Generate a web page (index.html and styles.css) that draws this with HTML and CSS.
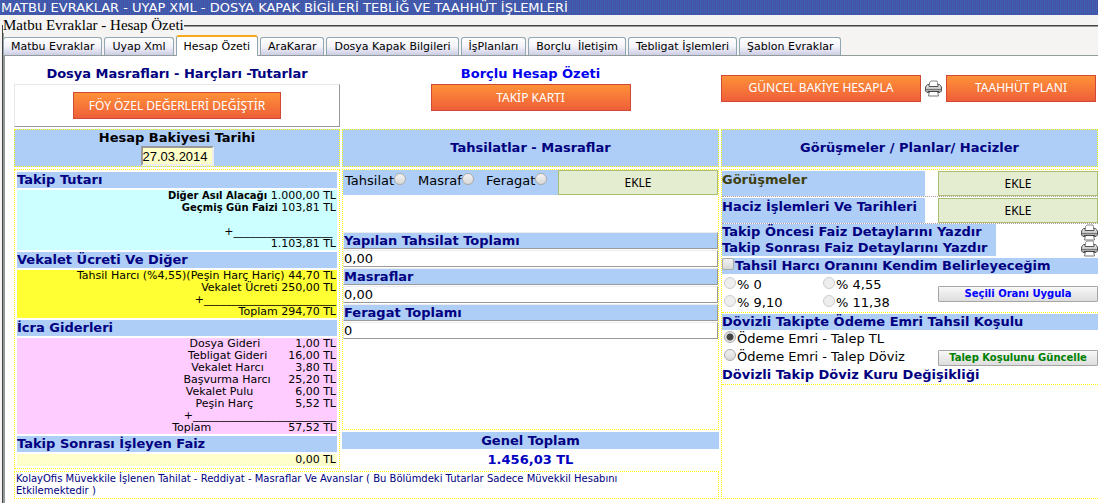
FILE: index.html
```html
<!DOCTYPE html>
<html lang="tr">
<head>
<meta charset="utf-8">
<title>Matbu Evraklar - Hesap Özeti</title>
<link rel="stylesheet" href="styles.css">
</head>
<body>
<svg class="defs" aria-hidden="true">
  <defs>
    <linearGradient id="metal" x1="0" y1="0" x2="0" y2="1">
      <stop offset="0" stop-color="#f4f4f4"/><stop offset="1" stop-color="#9a9a9a"/>
    </linearGradient>
  </defs>
  <symbol id="printer" viewBox="0 0 17 17">
    <path d="M4.500 5V2.500L6 1h6l.5 1.500V5" fill="#fff" stroke="#888"/>
    <path d="M2.500 4.500h1.500v2h9v-2h1.500l2 2.500v4l-1.500 1.500H2L.5 11V7z" fill="url(#metal)" stroke="#555"/>
    <path d="M1 9.500h15" stroke="#777"/>
    <path d="M4.500 11.500h8l1 4.500h-10z" fill="#fff" stroke="#777"/>
    <path d="M3 11.500h11" stroke="#444"/>
  </symbol>
</svg>
<header class="titlebar">MATBU EVRAKLAR - UYAP XML - DOSYA KAPAK BİGİLERİ TEBLİĞ VE TAAHHÜT İŞLEMLERİ</header>
<fieldset class="frame">
  <legend>Matbu Evraklar - Hesap Özeti</legend>
  <nav class="tabs">
    <button class="tab">Matbu Evraklar</button>
    <button class="tab">Uyap Xml</button>
    <button class="tab tab-active">Hesap Özeti</button>
    <button class="tab">AraKarar</button>
    <button class="tab">Dosya Kapak Bilgileri</button>
    <button class="tab">İşPlanları</button>
    <button class="tab">Borçlu&nbsp; İletişim</button>
    <button class="tab">Tebligat İşlemleri</button>
    <button class="tab">Şablon Evraklar</button>
  </nav>
  <main class="pane">
    <section class="top">
      <h2>Dosya Masrafları - Harçları -Tutarlar</h2>
      <div class="box"><button class="orange wide">FÖY ÖZEL DEĞERLERİ DEĞİŞTİR</button></div>
    </section>
    <section class="top">
      <h2 class="blue">Borçlu Hesap Özeti</h2>
      <button class="orange">TAKİP KARTI</button>
    </section>
    <section class="top-right">
      <button class="orange">GÜNCEL BAKİYE HESAPLA</button>
      <svg class="printer" role="img" aria-label="Yazdır"><use href="#printer"/></svg>
      <button class="orange short">TAAHHÜT PLANI</button>
    </section>

    <div class="colhead date">
      <label for="tarih">Hesap Bakiyesi Tarihi</label>
      <input id="tarih" type="text" value="27.03.2014">
    </div>
    <h2 class="colhead">Tahsilatlar - Masraflar</h2>
    <h2 class="colhead">Görüşmeler / Planlar/ Hacizler</h2>

    <section class="costs">
      <h3>Takip Tutarı</h3>
      <div class="sum cyan">
        <p><b>Diğer Asıl Alacağı</b> 1.000,00 TL</p>
        <p><b>Geçmiş Gün Faizi</b> 103,81 TL</p>
        <p>&nbsp;</p>
        <p>+__________________&nbsp;</p>
        <p>1.103,81 TL</p>
      </div>
      <h3>Vekalet Ücreti Ve Diğer</h3>
      <div class="sum yellow">
        <p>Tahsil Harcı (%4,55)(Peşin Harç Hariç) 44,70 TL</p>
        <p>Vekalet Ücreti 250,00 TL</p>
        <p>+________________________</p>
        <p>Toplam 294,70 TL</p>
      </div>
      <h3>İcra Giderleri</h3>
      <div class="sum pink">
        <p>Dosya Gideri          1,00 TL</p>
        <p>Tebligat Gideri      16,00 TL</p>
        <p>Vekalet Harcı         3,80 TL</p>
        <p>Başvurma Harcı     25,20 TL</p>
        <p>Vekalet Pulu            6,00 TL</p>
        <p>Peşin Harç            5,52 TL</p>
        <p>+__________________________</p>
        <p>Toplam                      57,52 TL</p>
      </div>
      <h3>Takip Sonrası İşleyen Faiz</h3>
      <div class="sum cream"><p>0,00 TL</p></div>
    </section>

    <section class="payments">
      <div class="entry">
        <div class="kinds">
          <label>Tahsilat<input type="radio" name="tur"></label>
          <label>Masraf<input type="radio" name="tur"></label>
          <label>Feragat<input type="radio" name="tur"></label>
        </div>
        <button class="green">EKLE</button>
      </div>
      <dl class="totals">
        <dt>Yapılan Tahsilat Toplamı</dt><dd>0,00</dd>
        <dt>Masraflar</dt><dd>0,00</dd>
        <dt>Feragat Toplamı</dt><dd>0</dd>
      </dl>
    </section>
    <section class="grand">
      <h3>Genel Toplam</h3>
      <p>1.456,03 TL</p>
    </section>

    <section class="plans">
      <div class="plan"><h3 class="olive">Görüşmeler</h3><button class="green">EKLE</button></div>
      <div class="plan"><h3>Haciz İşlemleri Ve Tarihleri</h3><button class="green">EKLE</button></div>
      <div class="print"><h3>Takip Öncesi Faiz Detaylarını Yazdır</h3><svg class="printer" role="img" aria-label="Yazdır"><use href="#printer"/></svg></div>
      <div class="print"><h3>Takip Sonrası Faiz Detaylarını Yazdır</h3><svg class="printer" role="img" aria-label="Yazdır"><use href="#printer"/></svg></div>
      <div class="option option-first">
        <h3><label><input type="checkbox">Tahsil Harcı Oranını Kendim Belirleyeceğim</label></h3>
        <div class="choices rate-choices">
          <div class="rates">
            <label><input type="radio" name="oran" disabled>% 0</label>
            <label><input type="radio" name="oran" disabled>% 4,55</label>
            <label><input type="radio" name="oran" disabled>% 9,10</label>
            <label><input type="radio" name="oran" disabled>% 11,38</label>
          </div>
          <button class="gray">Seçili Oranı Uygula</button>
        </div>
      </div>
      <div class="option">
        <h3>Dövizli Takipte Ödeme Emri Tahsil Koşulu</h3>
        <div class="choices low">
          <div class="demands">
            <label><input type="radio" name="talep" checked>Ödeme Emri - Talep TL</label>
            <label><input type="radio" name="talep">Ödeme Emri - Talep Döviz</label>
          </div>
          <button class="gray gray-green">Talep Koşulunu Güncelle</button>
        </div>
        <h3 class="plain">Dövizli Takip Döviz Kuru Değişikliği</h3>
      </div>
    </section>

    <p class="note">KolayOfis Müvekkile İşlenen Tahilat - Reddiyat - Masraflar Ve Avanslar ( Bu Bölümdeki Tutarlar Sadece Müvekkil Hesabını<br>Etkilemektedir )</p>
  </main>
</fieldset>
</body>
</html>
```
FILE: styles.css
```css
* { box-sizing: border-box; }
body {
  margin: 0;
  background: #f5f4f2;
  color: #000;
  font: 13px/16px Verdana, "DejaVu Sans", sans-serif;
}
h2, h3, p, dl, dd { margin: 0; }
h2, h3 { font-size: 13px; line-height: 16px; color: #000080; }
button, input { font-family: inherit; margin: 0; }
.defs { position: absolute; width: 0; height: 0; }

.titlebar {
  height: 15px;
  line-height: 15px;
  white-space: nowrap;
  overflow: hidden;
  padding-left: 1px;
  color: #fff;
  background: linear-gradient(90deg, #3a62b4 50%, #4c50a2 50%) 0 0 / 2px 2px;
}

.frame {
  margin: 3px 0 0 2px;
  padding: 0;
  min-width: 0;
  border: 2px groove #999;
  border-right: 0;
  border-bottom: 0;
}
.frame legend {
  margin-left: -1px;
  padding: 0;
  font: 15px/15px "Liberation Serif", serif;
}

.tabs { display: flex; align-items: flex-end; gap: 2px; height: 23px; border-bottom: 1px solid #919b9c; white-space: nowrap; }
.tab {
  height: 18px;
  padding: 0 7px;
  font-size: 11px;
  line-height: 16px;
  color: #000;
  border: 1px solid #91a7b4;
  border-bottom: 0;
  border-radius: 3px 3px 0 0;
  background: linear-gradient(#fff, #f3f3fa 50%, #cdcde4);
}
.tabs .tab:first-child { margin-left: -1px; }
.tab-active { height: 21px; margin-bottom: -1px; border-top: 2px solid #f5ab1c; background: #fff; }

.pane {
  display: grid;
  grid-template-columns: 326fr 377fr 377fr;
  grid-template-rows: 71px 38px 263px auto auto;
  column-gap: 2px;
  padding: 2px 0 5px 9px;
  border-left: 1px solid #919b9c;
  background: #fff;
}
.pane > * { min-width: 0; }

.top { display: flex; flex-direction: column; align-items: center; padding-top: 8px; gap: 2px; }
.blue { color: #0000ee; }
.box {
  align-self: stretch;
  display: flex;
  justify-content: center;
  padding: 7px 0;
  border: 1px solid #e8e8e8;
  border-right-color: #999;
  border-bottom-color: #999;
}
.top-right { display: flex; align-items: center; gap: 4px; height: 60px; }
.orange {
  width: 200px;
  height: 27px;
  padding: 0;
  border: 1px solid #d14836;
  background: linear-gradient(#ff9138, #ee5f39);
  color: #fff;
  font: 12px/16px Tahoma, "Noto Sans", sans-serif;
}
.wide { width: 208px; }
.short { width: 150px; }
.printer { width: 17px; height: 17px; flex: none; }

.colhead {
  display: flex;
  align-items: center;
  justify-content: center;
  background: #aecdf7;
  border: 1px dotted #ff0;
}
.date { flex-direction: column; font-weight: bold; }
.date input {
  width: 73px;
  height: 20px;
  padding: 0;
  border: 2px inset #eee;
  background: #ffffc8;
  font: 13px/16px Arial, "Liberation Sans", sans-serif;
}

.costs {
  grid-row: 3 / 5;
  align-self: start;
  margin-top: 2px;
  padding: 2px;
  display: flex;
  flex-direction: column;
  gap: 2px;
  border: 1px dotted #ff0;
}
.costs h3 { background: #aecdf7; }
.sum { padding-right: 1px; font-size: 11px; line-height: 12px; text-align: right; }
.sum p { white-space: pre; }
.sum b { font-size: 10px; }
.cyan { background: #cff; }
.yellow { background: #ff3; }
.pink { background: #fcf; }
.cream { background: #ffc; }

.payments { margin-top: 2px; border: 1px dotted #ff0; }
.entry { display: flex; background: #aecdf7; height: 25px; }
.kinds { flex: 1; display: flex; gap: 11px; padding: 2px 0 0 2px; }
.kinds label { display: flex; line-height: 18px; }
.green {
  width: 160px;
  height: 25px;
  padding: 0;
  border: 1px solid #a9bf74;
  background: #e4edcf;
  font: 12px/16px Tahoma, "Noto Sans", sans-serif;
}
.totals { margin-top: 37px; display: grid; gap: 1px; }
.totals dt, .totals dd { border: 1px solid #ececec; border-right-color: #999; border-bottom-color: #999; line-height: 15px; }
.totals dt { background: #aecdf7; color: #000080; font-weight: bold; }

.grand { text-align: center; font-weight: bold; color: #0000c0; padding-top: 2px; }
.grand h3 { background: #aecdf7; line-height: 17px; }
.grand p { line-height: 22px; }

.plans { grid-column: 3; grid-row: 3 / 6; margin-top: 2px; border: 1px dotted #ff0; border-right: 0; }
.plan { display: flex; justify-content: space-between; height: 27px; padding-top: 1px; border-bottom: 1px dotted #b09a9a; }
.plan h3 { width: 54%; line-height: 18px; background: #aecdf7; }
.plan .olive { color: #404010; }
.print { display: flex; justify-content: space-between; height: 16px; }
.print h3 { width: 73%; background: #aecdf7; white-space: nowrap; }
.option { padding-top: 1px; border-bottom: 1px dotted #ff0; }
.option-first { padding-top: 2px; }
.option h3 { background: #aecdf7; white-space: nowrap; }
.option .plain { background: none; line-height: 18px; }
.option label { display: flex; line-height: 18px; }
.option h3 label { line-height: 16px; }
.choices { display: flex; justify-content: space-between; align-items: center; }
.rate-choices { padding-top: 2px; }
.low { align-items: flex-end; }
.rates { display: grid; grid-template-columns: 99px 100px; padding-left: 2px; }
.demands { padding-left: 2px; }

input[type="radio"], input[type="checkbox"] {
  appearance: none;
  flex: none;
  width: 12px;
  height: 12px;
  margin: 1px 1px 0 0;
  border: 1px solid #aaa;
  border-radius: 50%;
  background: linear-gradient(#f2f2f2, #d8d8d8);
}
input[type="checkbox"] { border-radius: 2px; margin-top: 0; }
input[type="radio"]:disabled { border-color: #ccc; background: #eee; }
input[type="radio"]:checked { background: radial-gradient(circle, #444 0 3px, #e8e8e8 4px); }
.gray {
  width: 160px;
  height: 16px;
  padding: 0;
  border: 1px solid #a5a5a5;
  border-radius: 1px;
  background: linear-gradient(#f8f8f8, #ddd);
  color: #00f;
  font-size: 10px;
  line-height: 14px;
  font-weight: bold;
}
.gray-green { color: #008000; }

.note {
  grid-column: 1 / 3;
  align-self: start;
  padding: 1px;
  border: 1px dotted #ff0;
  font-size: 10px;
  line-height: 12px;
  color: #000080;
}
```
